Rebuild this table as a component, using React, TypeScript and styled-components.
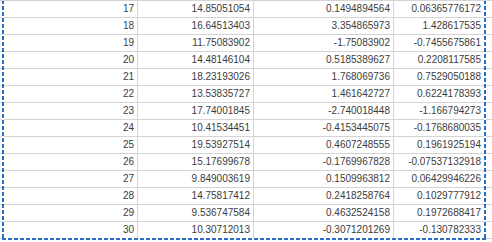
import React from "react";
import styled, { createGlobalStyle } from "styled-components";

const rows: [number, string, string, string][] = [
  [17, "14.85051054", "0.1494894564", "0.06365776172"],
  [18, "16.64513403", "3.354865973", "1.428617535"],
  [19, "11.75083902", "-1.75083902", "-0.7455675861"],
  [20, "14.48146104", "0.5185389627", "0.2208117585"],
  [21, "18.23193026", "1.768069736", "0.7529050188"],
  [22, "13.53835727", "1.461642727", "0.6224178393"],
  [23, "17.74001845", "-2.740018448", "-1.166794273"],
  [24, "10.41534451", "-0.4153445075", "-0.1768680035"],
  [25, "19.53927514", "0.4607248555", "0.1961925194"],
  [26, "15.17699678", "-0.1769967828", "-0.07537132918"],
  [27, "9.849003619", "0.1509963812", "0.06429946226"],
  [28, "14.75817412", "0.2418258764", "0.1029777912"],
  [29, "9.536747584", "0.4632524158", "0.1972688417"],
  [30, "10.30712013", "-0.3071201269", "-0.130782333"],
];

// column widths in px, including the right grid line
const widths = [135, 116, 140, 91];

const GlobalStyle = createGlobalStyle`
  html, body {
    margin: 0;
    padding: 0;
    background: #fff;
  }
`;

const Sheet = styled.div`
  position: relative;
  width: 492px;
  height: 242px;
  overflow: hidden;
  border-top: 1px solid #d4d4d4;
  box-sizing: border-box;
  font-family: "Liberation Sans", Arial, sans-serif;
  font-size: 10px;
  color: #3c3c3c;
`;

const Row = styled.div`
  display: flex;
  height: 17px;
  border-bottom: 1px solid #d4d4d4;
  box-sizing: border-box;
`;

const Stub = styled.div`
  width: 3px;
  flex: none;
  border-right: 1px solid #d4d4d4;
  box-sizing: border-box;
`;

const Cell = styled.div<{ $w: number }>`
  width: ${({ $w }) => $w}px;
  flex: none;
  display: flex;
  align-items: flex-end;
  justify-content: flex-end;
  padding: 0 3px 2px 0;
  border-right: 1px solid #d4d4d4;
  box-sizing: border-box;
  line-height: 12px;
  white-space: nowrap;
`;

const Filler = styled.div`
  flex: 1;
`;

// copy marquee drawn over the grid
const Marquee = styled.div`
  position: absolute;
  left: 2px;
  top: -1px;
  width: 484px;
  height: 240px;
  pointer-events: none;
`;

const EdgeV = styled.div<{ $side: "left" | "right" }>`
  position: absolute;
  top: 0;
  bottom: 0;
  ${({ $side }) => $side}: 0;
  width: 2px;
  background: repeating-linear-gradient(
    to bottom,
    #2c6cc4 0 4px,
    #ffffff 4px 6px
  );
`;

const EdgeH = styled.div`
  position: absolute;
  left: 0;
  right: 0;
  bottom: 0;
  height: 2px;
  background: repeating-linear-gradient(
    to right,
    #2c6cc4 0 4px,
    #ffffff 4px 6px
  );
`;

export default function App() {
  return (
    <>
      <GlobalStyle />
      <Sheet>
        {rows.map((r) => (
          <Row key={r[0]}>
            <Stub />
            {r.map((v, i) => (
              <Cell key={i} $w={widths[i]}>
                {v}
              </Cell>
            ))}
            <Filler />
          </Row>
        ))}
        <Marquee>
          <EdgeV $side="left" />
          <EdgeV $side="right" />
          <EdgeH />
        </Marquee>
      </Sheet>
    </>
  );
}
